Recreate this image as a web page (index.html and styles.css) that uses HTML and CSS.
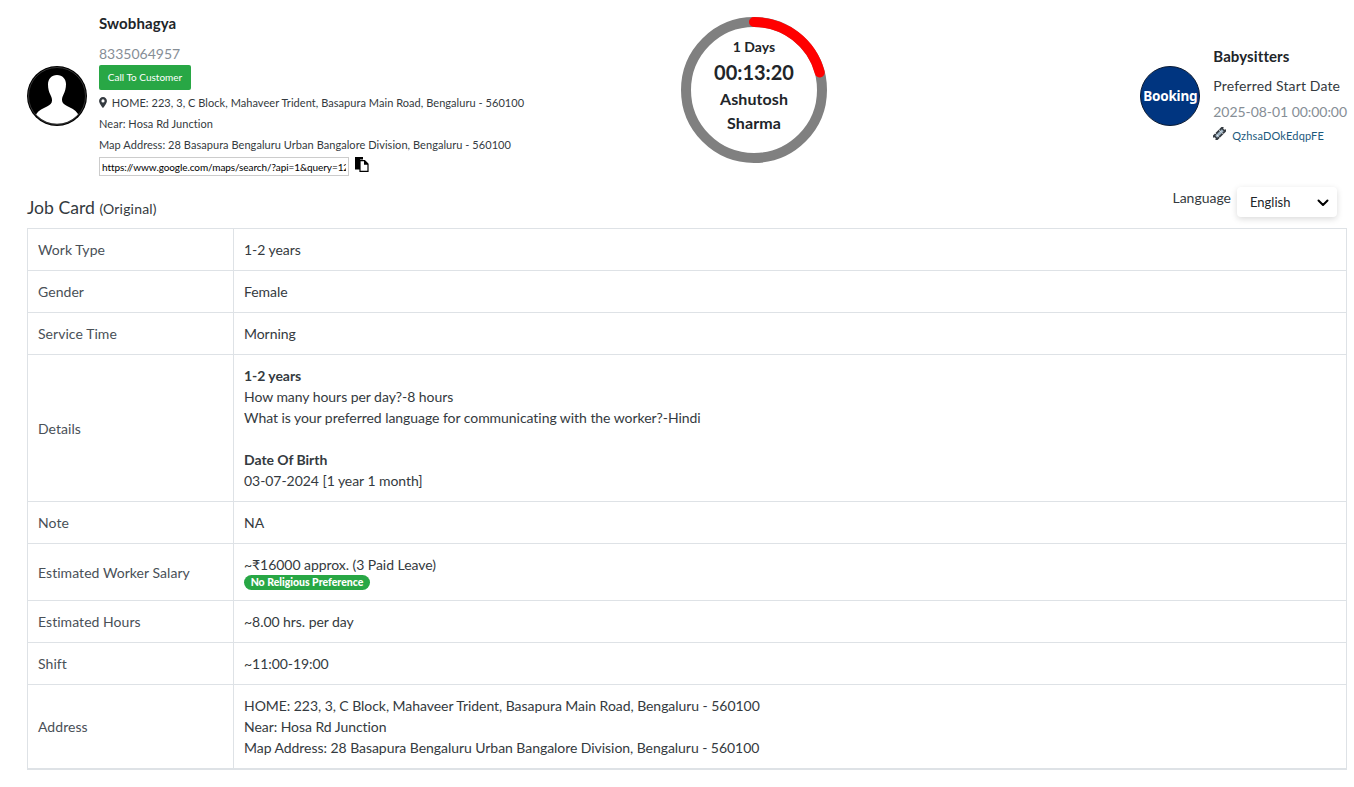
FILE: index.html
```html
<!DOCTYPE html>
<html lang="en">
<head>
<meta charset="utf-8">
<title>Job Card</title>
<link rel="stylesheet" href="styles.css">
</head>
<body>
<header class="top">
  <section class="party">
    <svg class="avatar" viewBox="0 0 60 60" aria-hidden="true">
      <defs><clipPath id="avatar-clip"><circle cx="30" cy="30" r="27.800"/></clipPath></defs>
      <circle cx="30" cy="30" r="30" fill="#000"/>
      <circle cx="30" cy="30" r="28.500" fill="none" stroke="#666" stroke-width=".5"/>
      <path clip-path="url(#avatar-clip)" fill="#fff" d="M30 9c-5.500 0-9 4-9 9.500 0 4 1 7.500 2.500 10.500 1 2 1.500 3.500 1.500 5.500 0 3-2 4.500-5 6-4 1.800-8 3.500-11 8v12h42V48c-3-4.500-7-6.200-11-8-3-1.500-5-3-5-6 0-2 .5-3.500 1.500-5.500 1.500-3 2.500-6.500 2.500-10.500C39 13 35.500 9 30 9z"/>
    </svg>
    <div class="party-info">
      <div class="name name-customer">Swobhagya</div>
      <div class="muted phone">8335064957</div>
      <a class="call" href="#">Call To Customer</a>
      <div class="addr">
        <svg class="pin" viewBox="0 0 10 14" aria-hidden="true"><path fill="#343a40" fill-rule="evenodd" d="M5 0C2.200 0 0 2.200 0 5c0 2.500 3.500 7.500 5 9 1.500-1.500 5-6.500 5-9 0-2.800-2.200-5-5-5zm0 3a2 2 0 1 1 0 4 2 2 0 0 1 0-4z"/></svg>
        HOME: 223, 3, C Block, Mahaveer Trident, Basapura Main Road, Bengaluru - 560100
      </div>
      <div class="addr">Near: Hosa Rd Junction</div>
      <div class="addr">Map Address: 28 Basapura Bengaluru Urban Bangalore Division, Bengaluru - 560100</div>
      <div class="link-row">
        <input class="link" type="text" value="https://www.google.com/maps/search/?api=1&amp;query=12.8900,77.6400" readonly>
        <svg class="copy" viewBox="0.500 0 14 15" aria-hidden="true">
          <path fill="#000" d="M1 0h8v2.500H6v10H1z"/>
          <path fill="#fff" stroke="#000" stroke-width="1.200" d="M6 3.600h4.500l3.500 3.500v7.300H6z"/>
          <path fill="#000" d="M10 3.600h1l3 3v1.200h-4z"/>
        </svg>
      </div>
    </div>
  </section>

  <div class="timer">
    <svg class="ring" viewBox="0 0 146 146" aria-hidden="true">
      <circle cx="73" cy="73" r="68" fill="none" stroke="#808080" stroke-width="10"/>
      <path fill="none" stroke="#f00" stroke-width="10" stroke-linecap="round" d="M73 5A68 68 0 0 1 138.700 55.400"/>
    </svg>
    <div class="timer-text">
      <div class="t-days">1 Days</div>
      <div class="t-clock">00:13:20</div>
      <div class="t-name">Ashutosh<br>Sharma</div>
    </div>
  </div>

  <section class="party party-right">
    <div class="logo"><span>Booking</span></div>
    <div class="party-info">
      <div class="name">Babysitters</div>
      <div class="pref">Preferred Start Date</div>
      <div class="muted date">2025-08-01 00:00:00</div>
      <div class="ticket">
        <svg class="ticket-icon" viewBox="0 0 14 14" aria-hidden="true">
          <g transform="rotate(-45 7 7)"><path fill="#343a40" d="M-1 3.500h16v2a1.500 1.500 0 0 0 0 3v2H-1v-2a1.500 1.500 0 0 0 0-3z"/><path fill="#9fb4c4" d="M2 5.500h10v3H2z"/><path stroke="#fff" stroke-width="1" stroke-dasharray="1.500 1" d="M4 3.500v7M9.500 3.500v7"/></g>
        </svg>
        <span>QzhsaDOkEdqpFE</span>
      </div>
    </div>
  </section>
</header>

<div class="title-row">
  <h1 class="title">Job Card <small>(Original)</small></h1>
  <div class="lang">
    <span class="lang-label">Language</span>
    <div class="select">
      <span>English</span>
      <svg class="chev" viewBox="0 0 12 8" aria-hidden="true"><path fill="none" stroke="#000" stroke-width="2" stroke-linecap="round" stroke-linejoin="round" d="M1.500 1.500 6 6l4.500-4.500"/></svg>
    </div>
  </div>
</div>

<table class="card">
  <tbody>
    <tr><th>Work Type</th><td>1-2 years</td></tr>
    <tr><th>Gender</th><td>Female</td></tr>
    <tr><th>Service Time</th><td>Morning</td></tr>
    <tr><th>Details</th><td><b>1-2 years</b><br>How many hours per day?-8 hours<br>What is your preferred language for communicating with the worker?-Hindi<br><br><b>Date Of Birth</b><br>03-07-2024 [1 year 1 month]</td></tr>
    <tr><th>Note</th><td>NA</td></tr>
    <tr><th>Estimated Worker Salary</th><td>~₹16000 approx. (3 Paid Leave)<br><span class="badge">No Religious Preference</span></td></tr>
    <tr><th>Estimated Hours</th><td>~8.00 hrs. per day</td></tr>
    <tr><th>Shift</th><td>~11:00-19:00</td></tr>
    <tr><th>Address</th><td>HOME: 223, 3, C Block, Mahaveer Trident, Basapura Main Road, Bengaluru - 560100<br>Near: Hosa Rd Junction<br>Map Address: 28 Basapura Bengaluru Urban Bangalore Division, Bengaluru - 560100</td></tr>
  </tbody>
</table>
</body>
</html>
```

FILE: styles.css
```css
* { box-sizing: border-box; }
html, body { margin: 0; padding: 0; }
body {
  font-family: Lato, "Noto Sans", sans-serif;
  font-size: 14px;
  line-height: 21px;
  color: #343a40;
  background: #fff;
  padding: 13px 7px 0 27px;
}
.top {
  display: grid;
  grid-template-columns: 1fr 146px 1fr;
  align-items: center;
  height: 166px;
}
.party { display: flex; align-items: center; gap: 12px; }
.party-right { justify-content: flex-end; gap: 13px; }
.avatar { width: 60px; height: 60px; flex: none; }
.party-info { min-width: 0; }
.name { font-weight: 700; font-size: 15px; letter-spacing: .1px; color: #212529; }
.name-customer { margin-bottom: 9px; }
.muted { color: #868e96; }
.phone { line-height: 21px; }
.call {
  display: block;
  width: 92px;
  height: 25px;
  margin-top: 1px;
  margin-bottom: 2px;
  background: #28a745;
  border-radius: 2px;
  color: #fff;
  font-size: 10px;
  line-height: 25px;
  text-align: center;
  text-decoration: none;
}
.addr { font-size: 11px; line-height: 21px; letter-spacing: .05px; color: #343a40; white-space: nowrap; }
.pin { width: 8px; height: 11px; margin-right: 2px; vertical-align: -1px; }
.link-row { display: flex; align-items: center; gap: 5px; margin-top: 2px; margin-bottom: 3px; }
.link {
  width: 250px;
  height: 19px;
  padding: 0 2px;
  border: 1px solid #ccc;
  font-family: Lato, sans-serif;
  font-size: 10px;
  letter-spacing: -.08px;
  color: #000;
  outline: none;
}
.copy { width: 15px; height: 15px; flex: none; margin-top: -4px; }

.timer {
  position: relative;
  width: 146px;
  height: 146px;
  align-self: start;
  margin-top: 4px;
  margin-left: 67px;
}
.ring { display: block; width: 146px; height: 146px; }
.timer-text {
  position: absolute;
  inset: 0;
  padding-top: 19px;
  text-align: center;
  color: #212529;
  font-weight: 700;
}
.t-days { font-size: 14px; line-height: 21px; }
.t-clock { font-size: 20px; line-height: 30px; }
.t-name { font-size: 16px; line-height: 24px; letter-spacing: .1px; }

.logo {
  width: 60px;
  height: 60px;
  flex: none;
  border-radius: 50%;
  background: #003580;
  border: 1px solid #0a1a33;
  padding-top: 1px;
  display: flex;
  align-items: center;
  justify-content: center;
  overflow: hidden;
}
.logo span { color: #fff; font-weight: 700; font-size: 13.500px; line-height: 1; font-family: "Noto Sans", sans-serif; letter-spacing: -.2px; }
.pref { margin-top: 8px; letter-spacing: .15px; color: #343a40; }
.date { margin-top: 5px; font-size: 14px; letter-spacing: -.05px; }
.ticket { display: flex; align-items: center; gap: 6px; font-size: 11px; letter-spacing: .15px; color: #1c5a7d; line-height: 21px; margin-top: 3px; margin-bottom: 1px; }
.ticket-icon { width: 13px; height: 13px; flex: none; margin-top: -3px; }

.title-row {
  display: flex;
  justify-content: space-between;
  align-items: flex-start;
  height: 50px;
  margin-top: -1px;
}
.title {
  margin: 19px 0 0;
  font-size: 17.600px;
  font-weight: 400;
  line-height: 21px;
  color: #343a40;
}
.title small { font-size: 14px; letter-spacing: .2px; }
.lang { display: flex; align-items: flex-start; gap: 6px; margin-right: 10px; margin-top: 9px; }
.lang-label { line-height: 21px; }
.select {
  width: 100px;
  height: 30px;
  padding: 0 8px 0 13px;
  display: flex;
  align-items: center;
  justify-content: space-between;
  background: #fff;
  border-radius: 4px;
  box-shadow: 0 2px 6px rgba(0, 0, 0, .15);
  color: #212529;
  font-size: 13px;
}
.chev { width: 12px; height: 8px; margin-top: 1px; }

.card {
  width: 1320px;
  border-collapse: collapse;
  border: 1px solid #dee2e6;
  border-bottom-width: 2px;
  color: #343a40;
}
.card th, .card td {
  border: 1px solid #dee2e6;
  padding: 10px;
  text-align: left;
  vertical-align: middle;
  font-weight: 400;
}
.card td { letter-spacing: -.05px; }
.card th { width: 206px; letter-spacing: .05px; color: #495057; }
.card td b { font-weight: 700; }
.badge {
  display: block;
  width: 126px;
  height: 15px;
  background: #28a745;
  color: #fff;
  border-radius: 8px;
  font-size: 10.500px;
  font-weight: 900;
  letter-spacing: 0;
  line-height: 15px;
  text-align: center;
}
```
